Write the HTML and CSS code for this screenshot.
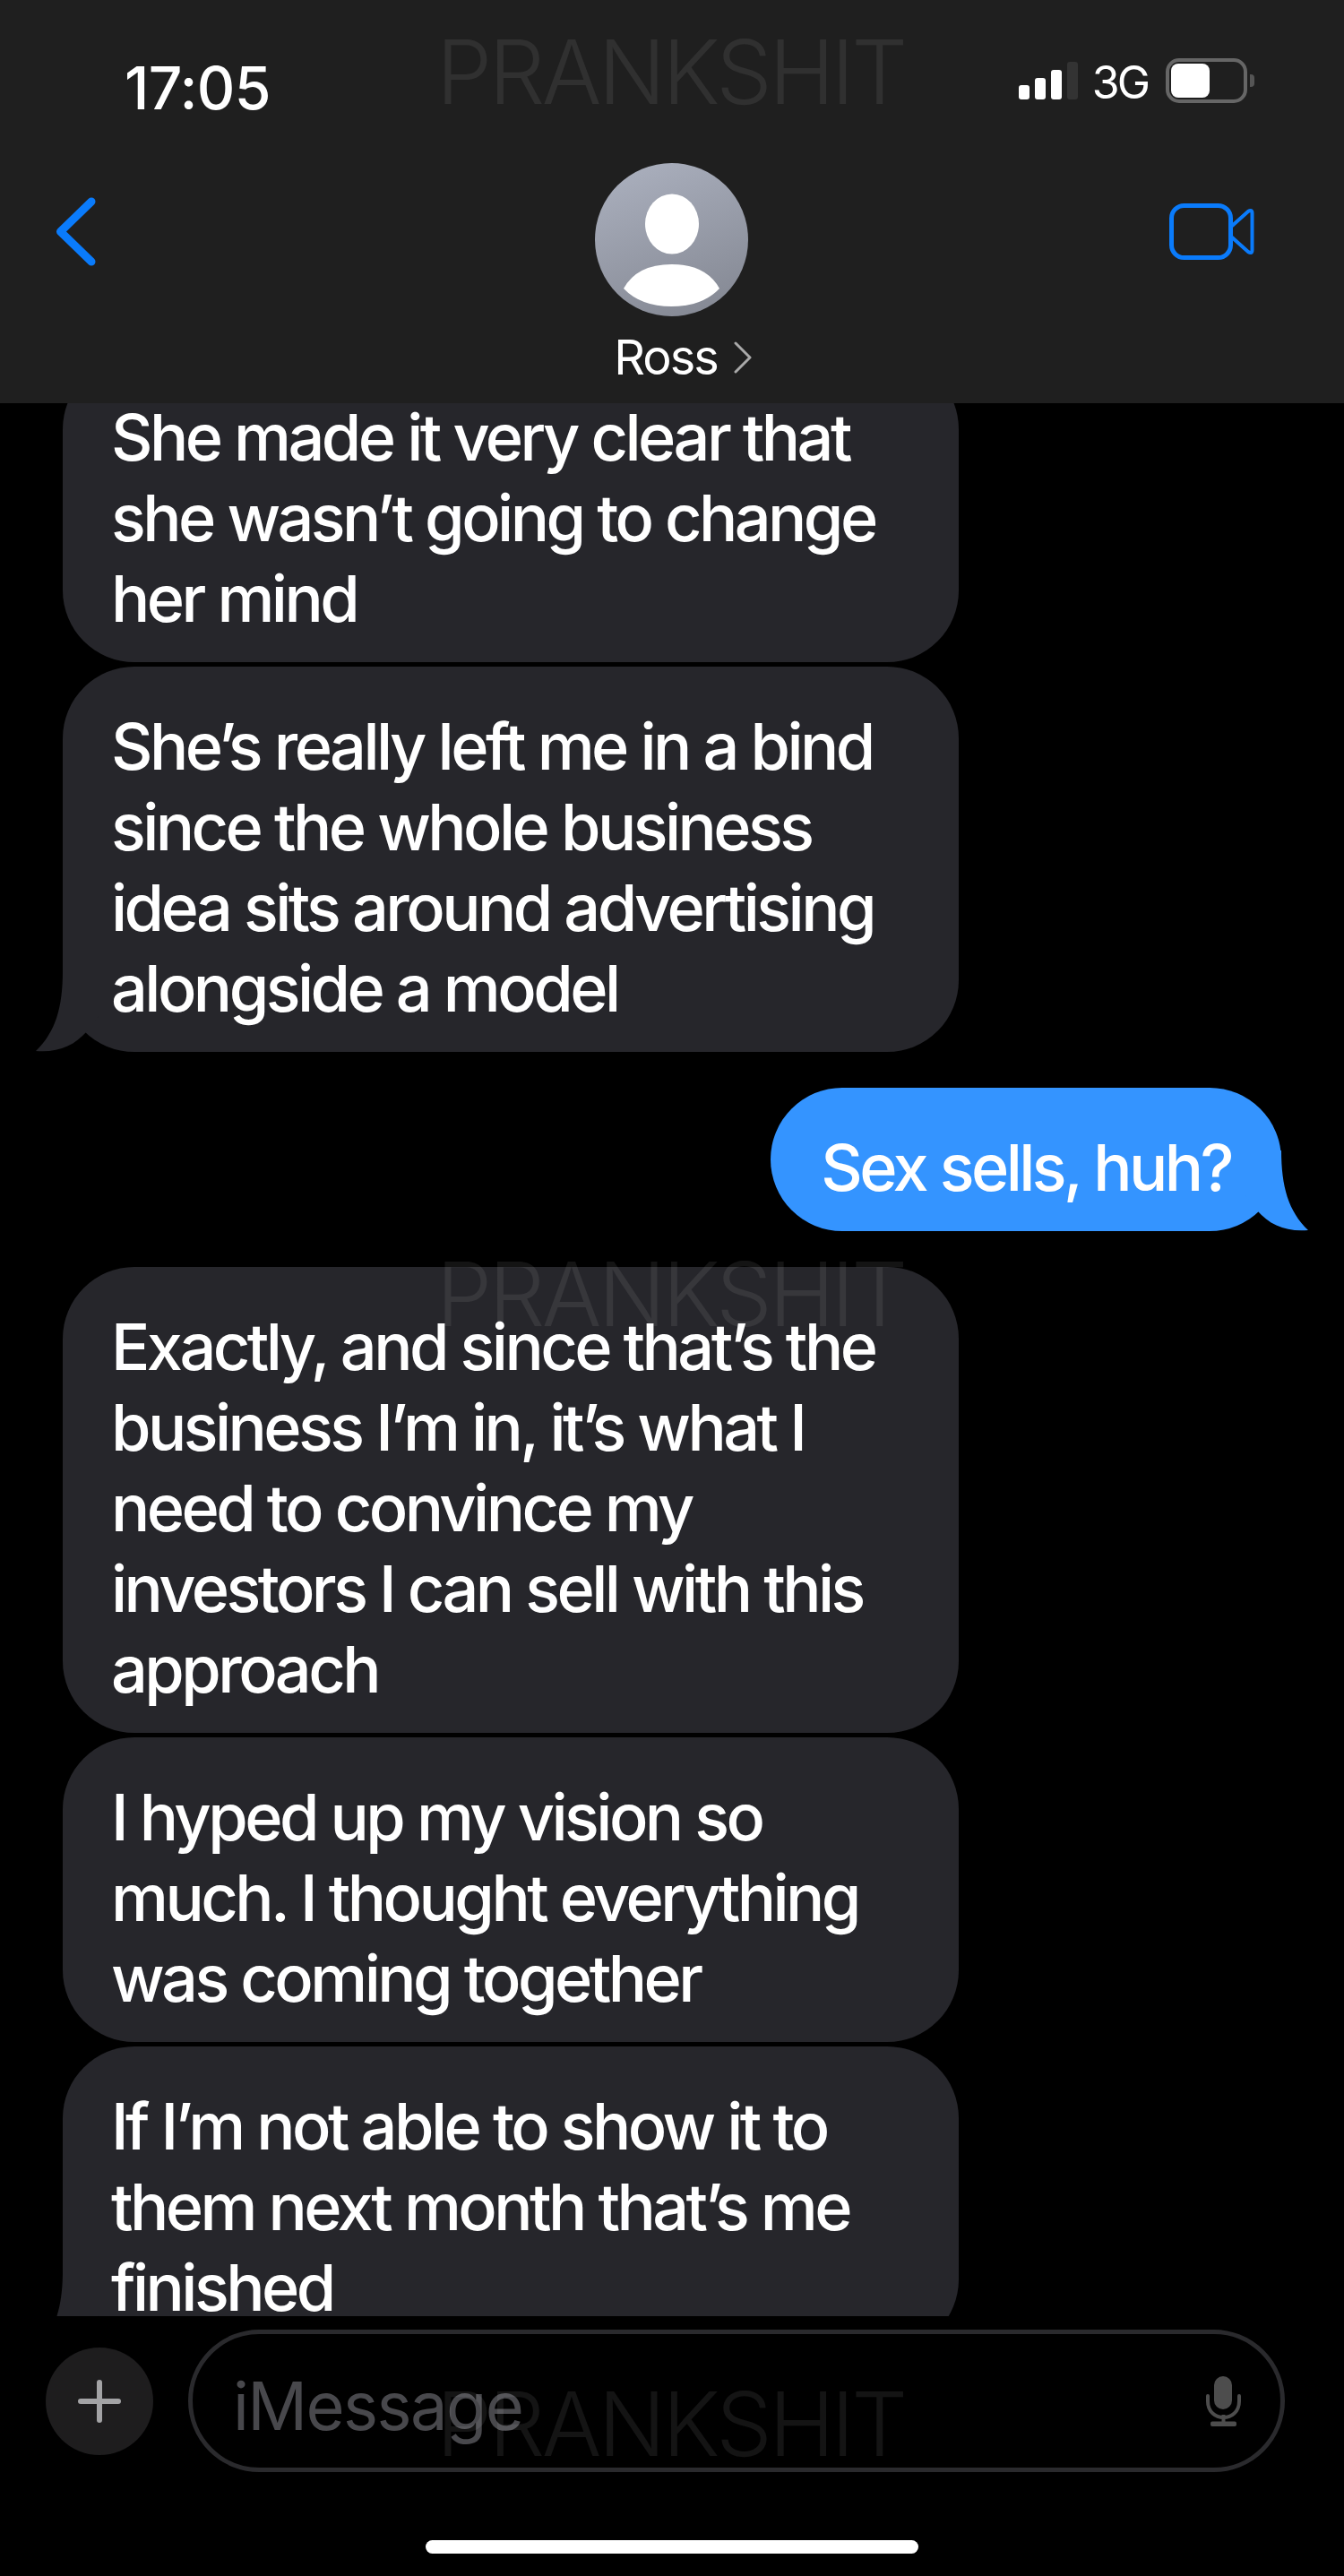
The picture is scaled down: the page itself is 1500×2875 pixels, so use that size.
FILE: index.html
```html
<!DOCTYPE html>
<html lang="en">
<head>
<meta charset="utf-8">
<title>Ross</title>
<link rel="stylesheet" href="styles.css">
</head>
<body>
<main class="phone">
  <header class="topbar">
    <div class="status">
      <span class="clock">17:05</span>
      <div class="status-icons">
        <div class="signal">
          <i class="bar bar-1"></i><i class="bar bar-2"></i><i class="bar bar-3"></i><i class="bar bar-4"></i>
        </div>
        <span class="network">3G</span>
        <div class="battery"><div class="battery-level"></div></div>
        <div class="battery-nub"></div>
      </div>
    </div>
    <nav class="nav">
      <svg class="back" viewBox="0 0 45 77" aria-hidden="true">
        <path d="M40 5 L5.500 38.500 L40 72" fill="none" stroke="#0a7bfb" stroke-width="9" stroke-linecap="round" stroke-linejoin="round"/>
      </svg>
      <div class="contact">
        <svg class="avatar" viewBox="0 0 171 171" aria-hidden="true">
          <defs>
            <linearGradient id="avatar-fill" x1="0.300" y1="0" x2="0.700" y2="1">
              <stop offset="0" stop-color="#a9aebc"/>
              <stop offset="1" stop-color="#858994"/>
            </linearGradient>
          </defs>
          <circle cx="85.500" cy="85.500" r="85.500" fill="url(#avatar-fill)"/>
          <ellipse cx="86" cy="68" rx="30" ry="33.500" fill="#fff"/>
          <path d="M32 140 Q47 113 85.500 113 Q124 113 139 140 Q120 160 85.500 160 Q51 160 32 140 Z" fill="#fff"/>
        </svg>
        <div class="contact-name">
          <span>Ross</span>
          <svg class="disclosure" viewBox="0 0 20 36" aria-hidden="true">
            <path d="M2 2 L18 18 L2 34" fill="none" stroke="#a9a9a9" stroke-width="3" stroke-linecap="round" stroke-linejoin="round"/>
          </svg>
        </div>
      </div>
      <svg class="video" viewBox="0 0 95 63" aria-hidden="true">
        <rect x="2.500" y="2.500" width="66" height="58" rx="14" fill="none" stroke="#0a7bfb" stroke-width="5"/>
        <path d="M69 26 L88 9 Q92.500 6 92.500 11 V52 Q92.500 57 88 54 L69 37" fill="none" stroke="#0a7bfb" stroke-width="4" stroke-linejoin="round"/>
      </svg>
    </nav>
  </header>

  <section class="thread">
    <div class="bubble incoming first">She made it very clear that<br>she wasn’t going to change<br>her mind</div>
    <div class="bubble incoming tight">
      She’s really left me in a bind<br>since the whole business<br>idea sits around advertising<br>alongside a model
      <svg class="tail tail-left" viewBox="0 0 70 90" aria-hidden="true"><path d="M30 0 C30 40 22 68 0 89 C25 91 43 83 57 67 L70 50 L70 0 Z"/></svg>
    </div>
    <div class="bubble outgoing">
      Sex sells, huh?
      <svg class="tail tail-right" viewBox="0 0 70 90" aria-hidden="true"><path d="M30 0 C30 40 22 68 0 89 C25 91 43 83 57 67 L70 50 L70 0 Z"/></svg>
    </div>
    <div class="bubble incoming spaced">Exactly, and since that’s the<br>business I’m in, it’s what I<br>need to convince my<br>investors I can sell with this<br>approach</div>
    <div class="bubble incoming tight">I hyped up my vision so<br>much. I thought everything<br>was coming together</div>
    <div class="bubble incoming tight">
      If I’m not able to show it to<br>them next month that’s me<br>finished
      <svg class="tail tail-left" viewBox="0 0 70 90" aria-hidden="true"><path d="M30 0 C30 40 22 68 0 89 C25 91 43 83 57 67 L70 50 L70 0 Z"/></svg>
    </div>
  </section>

  <footer class="composer">
    <div class="composer-row">
      <div class="add">
        <svg class="add-icon" viewBox="0 0 48 48" aria-hidden="true">
          <path d="M24 3 V45 M3 24 H45" stroke="#a3a3a5" stroke-width="6" stroke-linecap="round"/>
        </svg>
      </div>
      <div class="field">
        <span class="placeholder">iMessage</span>
        <svg class="mic" viewBox="0 0 39 56" aria-hidden="true">
          <rect x="9" y="0" width="20" height="37" rx="10" fill="#4d4d4d"/>
          <path d="M2 22 V28 C2 52 37 52 37 28 V22" fill="none" stroke="#4d4d4d" stroke-width="4" stroke-linecap="round"/>
          <path d="M19.500 43 V52" stroke="#4d4d4d" stroke-width="4"/>
          <rect x="5" y="50.500" width="29" height="5.500" rx="2" fill="#4d4d4d"/>
        </svg>
      </div>
    </div>
    <div class="home-bar"></div>
  </footer>

  <div class="stamp stamp-top">PRANKSHIT</div>
  <div class="stamp stamp-mid">PRANKSHIT</div>
  <div class="stamp stamp-low">PRANKSHIT</div>
</main>
</body>
</html>
```

FILE: styles.css
```css
* {
  box-sizing: border-box;
}

html,
body {
  margin: 0;
  background: #000;
}

.phone {
  position: relative;
  display: flex;
  flex-direction: column;
  width: 1500px;
  height: 2875px;
  overflow: hidden;
  background: #000;
  color: #fff;
  font-family: Inter, "Liberation Sans", sans-serif;
}

/* Top bar */
.topbar {
  flex: none;
  height: 450px;
  background: #1f1f1f;
}

.status {
  display: flex;
  justify-content: space-between;
  align-items: flex-start;
  height: 182px;
  padding: 65px 100px 0 139px;
}

.clock {
  font-size: 66px;
  line-height: 66px;
  font-weight: 500;
  letter-spacing: -0.700px;
}

.status-icons {
  display: flex;
  align-items: flex-start;
}

.signal {
  display: flex;
  align-items: flex-end;
  gap: 6.500px;
  height: 46px;
}

.bar {
  display: block;
  width: 11.500px;
  border-radius: 3px;
  background: #fff;
}

.bar-1 { height: 16px; }
.bar-2 { height: 24px; }
.bar-3 { height: 33px; }
.bar-4 { height: 42px; background: #333; }

.network {
  margin-left: 16px;
  font-size: 50px;
  line-height: 54px;
  letter-spacing: -3px;
}

.battery {
  width: 91px;
  height: 50px;
  margin-left: 20px;
  padding: 2px;
  border: 4px solid #666;
  border-radius: 15px;
}

.battery-level {
  width: 43px;
  height: 38px;
  border-radius: 8px;
  background: #fff;
}

.battery-nub {
  width: 5px;
  height: 14px;
  margin: 18px 0 0 3px;
  border-radius: 0 4px 4px 0;
  background: #555;
}

.nav {
  display: grid;
  grid-template-columns: 1fr auto 1fr;
  align-items: start;
  padding: 0 100px;
}

.back {
  width: 45px;
  height: 77px;
  margin: 38px 0 0 -38px;
}

.contact {
  display: flex;
  flex-direction: column;
  align-items: center;
}

.avatar {
  display: block;
  width: 171px;
  height: 171px;
}

.contact-name {
  display: flex;
  align-items: center;
  gap: 18px;
  margin: 15px 0 0 24px;
  font-size: 54px;
  line-height: 62px;
  letter-spacing: -2px;
}

.disclosure {
  width: 20px;
  height: 36px;
}

.video {
  justify-self: end;
  width: 95px;
  height: 63px;
  margin-top: 45px;
}

/* Conversation */
.thread {
  flex: none;
  display: flex;
  flex-direction: column;
  align-items: flex-start;
  height: 2135px;
  padding: 0 70px;
  overflow: hidden;
}

.bubble {
  position: relative;
  flex: none;
  padding: 44px 54px 26px;
  border-radius: 80px;
  font-size: 72px;
  line-height: 90px;
  font-weight: 450;
  letter-spacing: -3.550px;
  white-space: nowrap;
}

.incoming {
  width: 1000px;
  background: #26262b;
  fill: #26262b;
}

.outgoing {
  align-self: flex-end;
  margin-top: 40px;
  padding-left: 56px;
  padding-right: 56px;
  background: #3494ff;
  fill: #3494ff;
}

.first {
  margin-top: -51px;
}

.tight {
  margin-top: 5px;
}

.spaced {
  margin-top: 40px;
}

.tail {
  position: absolute;
  bottom: 0;
  width: 70px;
  height: 90px;
}

.tail-left {
  left: -30px;
}

.tail-right {
  right: -30px;
  transform: scaleX(-1);
}

/* Message composer */
.composer {
  flex: 1;
  display: flex;
  flex-direction: column;
  padding: 15px 66px 0 51px;
}

.composer-row {
  display: flex;
  align-items: center;
  gap: 39px;
}

.add {
  flex: none;
  display: flex;
  align-items: center;
  justify-content: center;
  width: 120px;
  height: 120px;
  border-radius: 50%;
  background: #1e1d1e;
}

.add-icon {
  width: 48px;
  height: 48px;
}

.field {
  flex: 1;
  display: flex;
  align-items: center;
  justify-content: space-between;
  height: 159px;
  padding: 0 44px 0 45px;
  border: 5px solid #2a2a2d;
  border-radius: 80px;
}

.placeholder {
  margin-top: 10px;
  color: #48484c;
  font-size: 74px;
  line-height: 90px;
  letter-spacing: -1.600px;
}

.mic {
  width: 39px;
  height: 56px;
}

.home-bar {
  align-self: center;
  width: 550px;
  height: 15px;
  margin: 76px 0 0 15px;
  border-radius: 8px;
  background: #fff;
}

/* Faint repeated wordmark across the screen */
.stamp {
  position: absolute;
  left: 487px;
  color: rgba(255, 255, 255, 0.08);
  font-size: 99px;
  line-height: 100px;
  font-weight: 300;
  letter-spacing: -3.600px;
  pointer-events: none;
}

.stamp-top { top: 30px; }
.stamp-mid { top: 1394px; }
.stamp-low { top: 2655px; }
```
